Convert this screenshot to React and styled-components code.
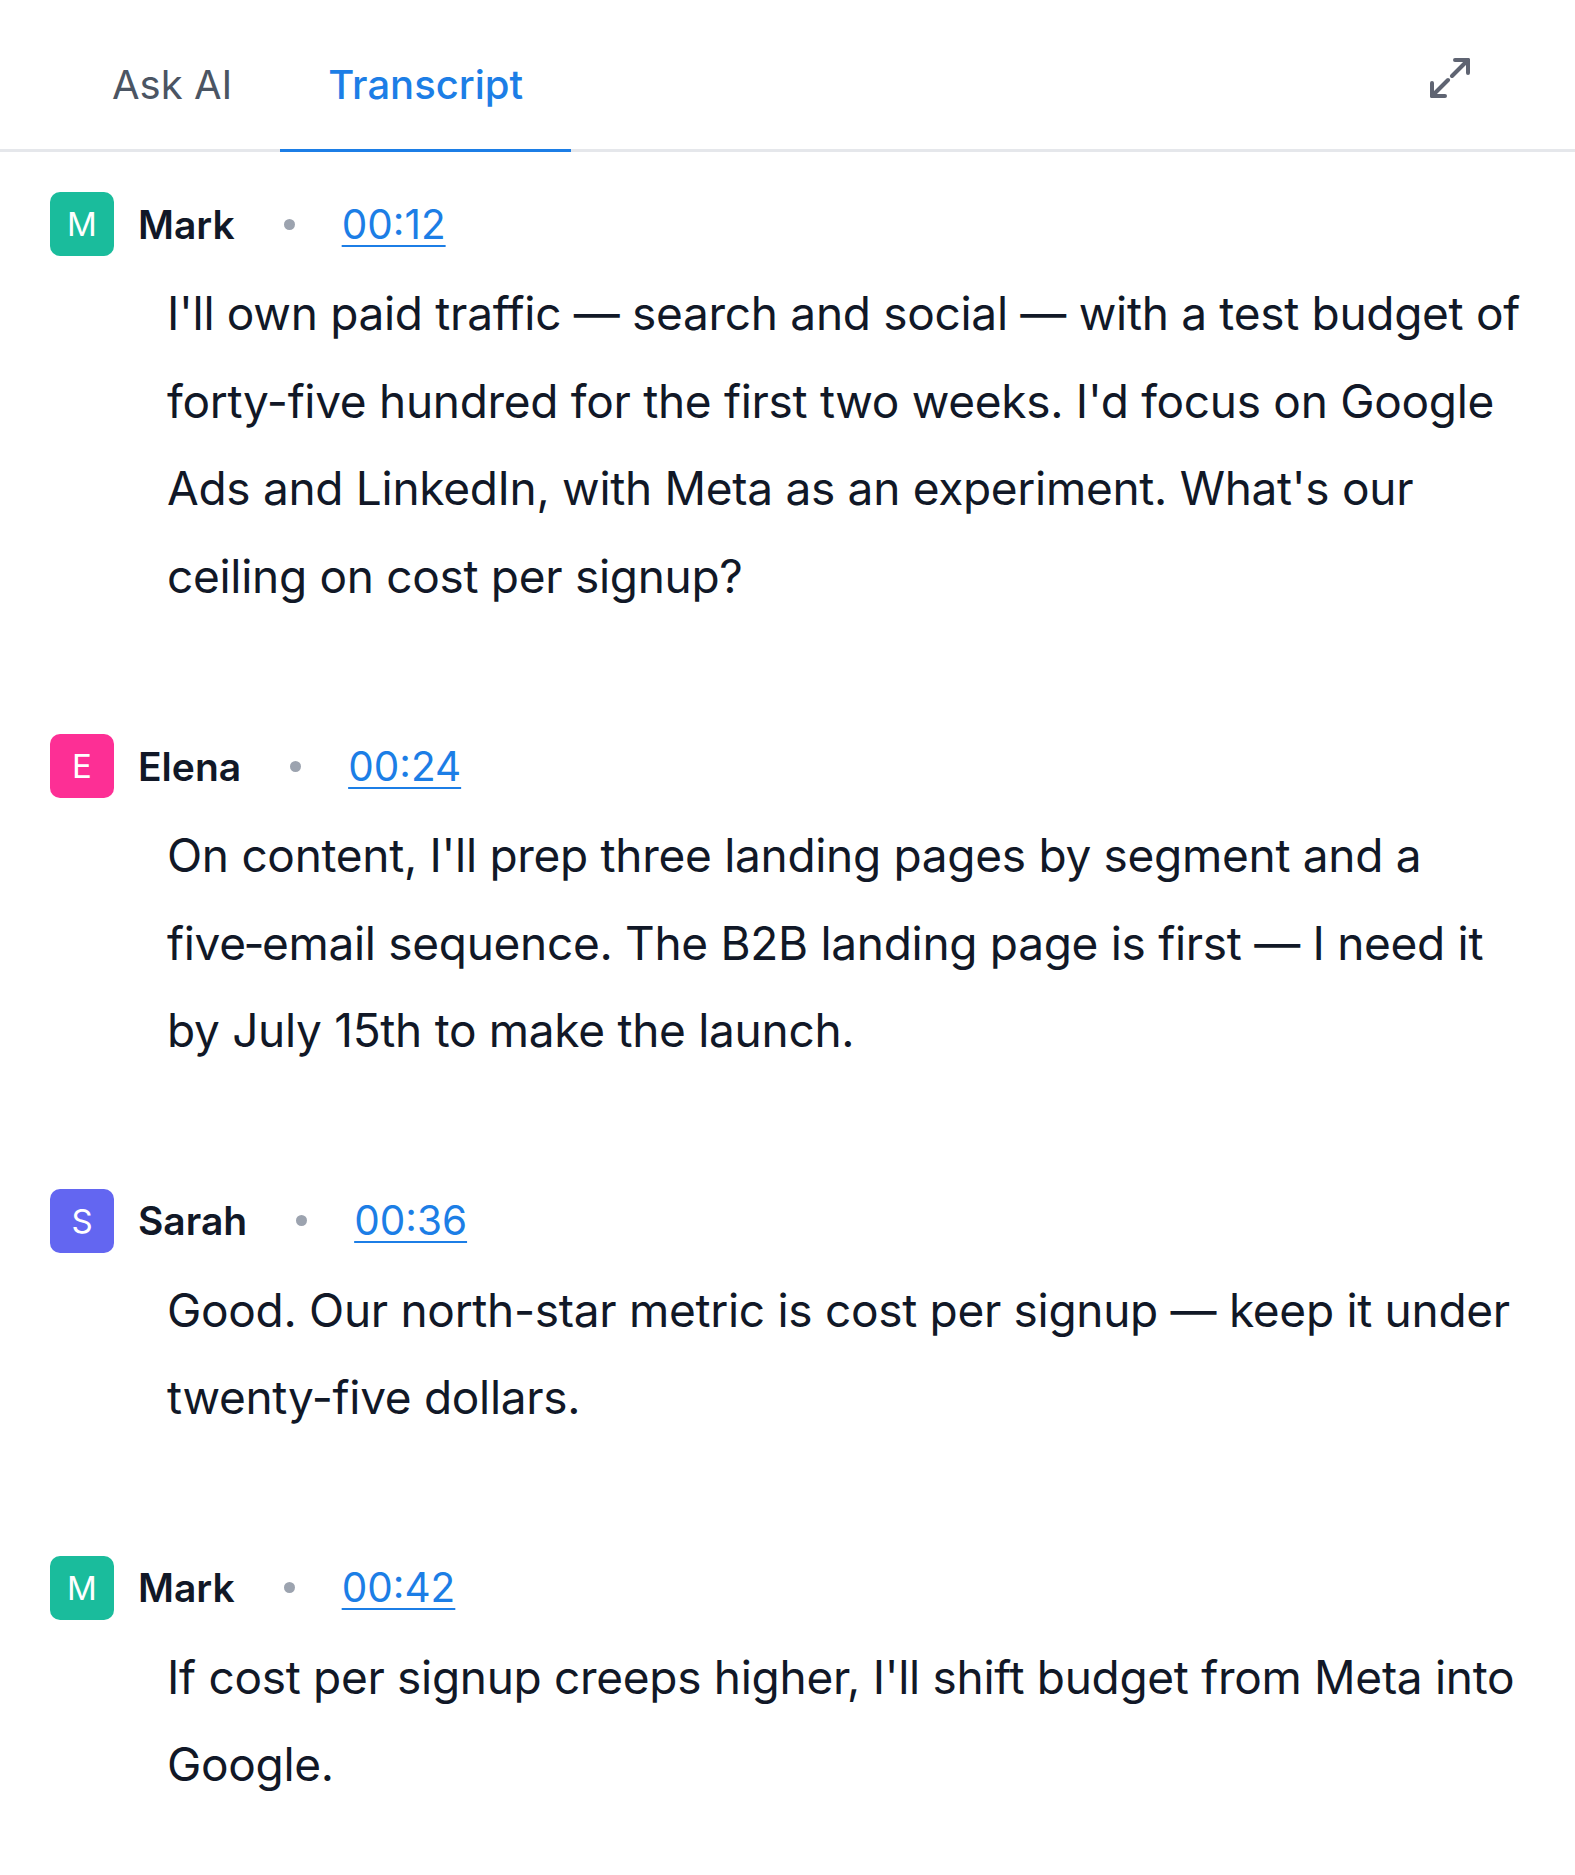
import styled, { createGlobalStyle } from 'styled-components';

const GlobalStyle = createGlobalStyle`
    body {
        margin: 0;
        background: #ffffff;
        font-family: Inter, "Noto Sans", sans-serif;
        color: #111827;
    }
`;

const Panel = styled.div`
    width: 100%;
    background: #ffffff;
`;

const TabBar = styled.div`
    display: flex;
    align-items: flex-end;
    height: 149px;
    padding: 0 105px 0 64px;
    border-bottom: 3px solid #e5e7eb;
`;

const Tab = styled.button`
    background: none;
    border: 0;
    border-bottom: 3px solid ${({ $active }) => ($active ? '#1c7ee6' : 'transparent')};
    margin-bottom: -3px;
    padding: 0 48px 40px;
    font-family: inherit;
    font-size: 40px;
    line-height: 48px;
    font-weight: ${({ $active }) => ($active ? 500 : 400)};
    color: ${({ $active }) => ($active ? '#1c7ee6' : '#4b5563')};
    cursor: pointer;
`;

const ExpandButton = styled.button`
    margin-left: auto;
    align-self: flex-start;
    margin-top: 58px;
    width: 40px;
    height: 40px;
    padding: 0;
    border: 0;
    background: none;
    color: #5f6472;
    cursor: pointer;

    svg {
        display: block;
    }
`;

const List = styled.div`
    display: flex;
    flex-direction: column;
    gap: 114px;
    padding: 40px 40px 80px 50px;
`;

const Entry = styled.div`
    display: flex;
    flex-direction: column;
`;

const Speaker = styled.div`
    display: flex;
    align-items: center;
    height: 64px;
`;

const Avatar = styled.div`
    width: 64px;
    height: 64px;
    border-radius: 10px;
    background: ${({ $color }) => $color};
    color: #ffffff;
    display: flex;
    align-items: center;
    justify-content: center;
    font-size: 33px;
    font-weight: 400;
    flex-shrink: 0;
`;

const Name = styled.span`
    margin-left: 24px;
    font-size: 39px;
    font-weight: 600;
    color: #111827;
`;

const Dot = styled.span`
    width: 11px;
    height: 11px;
    border-radius: 50%;
    background: #9ca3af;
    margin: 0 47px 0 49px;
`;

const Stamp = styled.a`
    font-size: 40.5px;
    color: #1c7ee6;
    text-decoration: underline;
    text-decoration-thickness: 2px;
    text-underline-offset: 6px;
    cursor: pointer;
`;

const Text = styled.p`
    margin: 14px 0 0 117px;
    font-size: 46px;
    line-height: 87.5px;
    letter-spacing: -0.3px;
    color: #111827;
`;

// "five‑email" uses a non-breaking hyphen so the compound stays together
const entries = [
    {
        name: 'Mark',
        color: '#1abc9c',
        time: '00:12',
        text: "I'll own paid traffic — search and social — with a test budget of forty-five hundred for the first two weeks. I'd focus on Google Ads and LinkedIn, with Meta as an experiment. What's our ceiling on cost per signup?",
    },
    {
        name: 'Elena',
        color: '#fd2f95',
        time: '00:24',
        text: "On content, I'll prep three landing pages by segment and a five\u2011email sequence. The B2B landing page is first — I need it by July 15th to make the launch.",
    },
    {
        name: 'Sarah',
        color: '#6366f1',
        time: '00:36',
        text: 'Good. Our north-star metric is cost per signup — keep it under twenty-five dollars.',
    },
    {
        name: 'Mark',
        color: '#1abc9c',
        time: '00:42',
        text: "If cost per signup creeps higher, I'll shift budget from Meta into Google.",
    },
];

const ExpandIcon = () => (
    <svg width="40" height="40" viewBox="0 0 40 40" fill="none" stroke="currentColor" strokeWidth="4" strokeLinecap="round" strokeLinejoin="round">
        <polyline points="25,2 38,2 38,15" />
        <line x1="38" y1="2" x2="22" y2="18" />
        <polyline points="2,25 2,38 15,38" />
        <line x1="2" y1="38" x2="18" y2="22" />
    </svg>
);

export default function App() {
    return (
        <>
            <GlobalStyle />
            <Panel>
                <TabBar>
                    <Tab>Ask AI</Tab>
                    <Tab $active>Transcript</Tab>
                    <ExpandButton aria-label="Expand">
                        <ExpandIcon />
                    </ExpandButton>
                </TabBar>
                <List>
                    {entries.map((entry, i) => (
                        <Entry key={i}>
                            <Speaker>
                                <Avatar $color={entry.color}>{entry.name[0]}</Avatar>
                                <Name>{entry.name}</Name>
                                <Dot />
                                <Stamp>{entry.time}</Stamp>
                            </Speaker>
                            <Text>{entry.text}</Text>
                        </Entry>
                    ))}
                </List>
            </Panel>
        </>
    );
}
